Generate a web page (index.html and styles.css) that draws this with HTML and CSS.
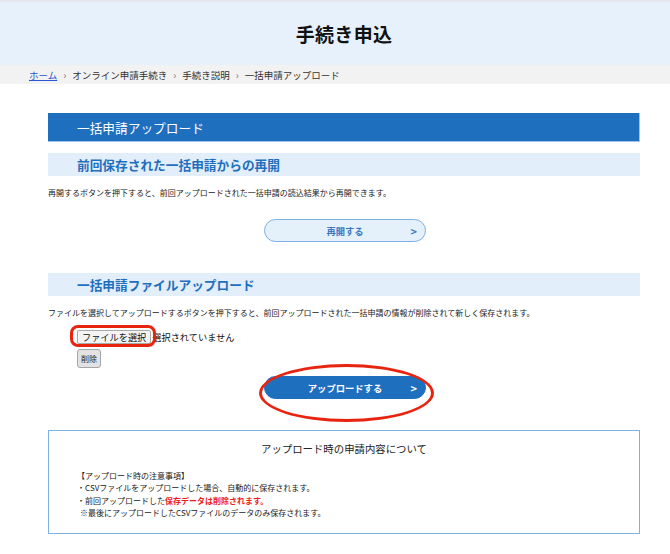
FILE: index.html
```html
<!DOCTYPE html>
<html lang="ja">
<head>
<meta charset="utf-8">
<title>手続き申込</title>
<link rel="stylesheet" href="styles.css">
</head>
<body>
<div class="topstrip"></div>
<header class="page-header">
  <h1 class="page-title">手続き申込</h1>
</header>
<nav class="breadcrumb">
  <a class="crumb-link" href="#">ホーム</a><span class="sep">›</span><span>オンライン申請手続き</span><span class="sep">›</span><span>手続き説明</span><span class="sep">›</span><span>一括申請アップロード</span>
</nav>
<main class="main">
  <h2 class="sec-title">一括申請アップロード</h2>

  <h3 class="sub-title">前回保存された一括申請からの再開</h3>
  <p class="desc">再開するボタンを押下すると、前回アップロードされた一括申請の読込結果から再開できます。</p>
  <div class="btn-row btn-row-resume">
    <button class="pill pill-light" type="button"><span class="pill-label">再開する</span><span class="pill-arrow">&gt;</span></button>
  </div>

  <h3 class="sub-title sub-title-2">一括申請ファイルアップロード</h3>
  <p class="desc">ファイルを選択してアップロードするボタンを押下すると、前回アップロードされた一括申請の情報が削除されて新しく保存されます。</p>
  <div class="file-area">
    <div class="file-row">
      <button class="file-btn" type="button">ファイルを選択</button><span class="file-status">選択されていません</span>
      <span class="mark-rect"></span>
    </div>
    <button class="del-btn" type="button">削除</button>
  </div>
  <div class="btn-row btn-row-upload">
    <button class="pill pill-dark" type="button"><span class="pill-label">アップロードする</span><span class="pill-arrow">&gt;</span></button>
    <span class="mark-ellipse"></span>
  </div>

  <section class="info-box">
    <h4 class="info-title">アップロード時の申請内容について</h4>
    <div class="info-body">
      <p class="info-line">【アップロード時の注意事項】</p>
      <p class="info-line">・CSVファイルをアップロードした場合、自動的に保存されます。</p>
      <p class="info-line">・前回アップロードした<strong class="warn">保存データは削除されます。</strong></p>
      <p class="info-line info-note">※最後にアップロードしたCSVファイルのデータのみ保存されます。</p>
    </div>
  </section>
</main>
</body>
</html>
```
FILE: styles.css
```css
* { box-sizing: border-box; }
html, body { margin: 0; padding: 0; background: #ffffff; }
body {
  font-family: "Noto Sans CJK JP", "Noto Sans", "DejaVu Sans", sans-serif;
  color: #222;
  width: 670px;
  height: 554px;
  overflow: hidden;
}
.topstrip { height: 2px; background: #e6e7ec; }
.page-header {
  height: 63px;
  background: #e7f1fc;
  display: flex;
  align-items: center;
  justify-content: center;
  padding-left: 18px;
}
.page-title {
  margin: 0;
  font-size: 19px;
  font-weight: 700;
  color: #111;
  letter-spacing: 0.3px;
}
.breadcrumb {
  height: 19px;
  background: #f2f2f2;
  padding-left: 29px;
  display: flex;
  align-items: center;
  font-size: 9.5px;
  color: #333;
  white-space: nowrap;
}
.crumb-link { color: #2a55d6; text-decoration: underline; }
.sep { padding: 0 6px; color: #777; font-size: 10px; }
.main {
  margin-left: 48px;
  width: 592px;
  padding-top: 29px;
}
.sec-title {
  margin: 0;
  height: 29px;
  background: #1f6fbf;
  border-bottom: 1px solid #9cc3ec;
  border-right: 1px solid #9cc3ec;
  color: #fff;
  font-size: 12.7px;
  font-weight: 400;
  padding-left: 29px;
  display: flex;
  align-items: center;
}
.sub-title {
  margin: 11px 0 0;
  height: 23px;
  background: #e2eef9;
  color: #1f6fbf;
  font-size: 12.7px;
  font-weight: 700;
  padding-left: 29px;
  display: flex;
  align-items: center;
}
.sub-title-2 { margin-top: 31px; }
.desc {
  margin: 11px 0 0;
  font-size: 8px;
  line-height: 12px;
  color: #222;
}
.btn-row { display: flex; justify-content: center; padding-left: 2px; }
.btn-row-resume { margin-top: 20px; }
.pill {
  width: 162px;
  height: 23px;
  border-radius: 12px;
  font-family: inherit;
  position: relative;
  display: flex;
  align-items: center;
  justify-content: center;
  padding: 0;
  cursor: pointer;
}
.pill-light {
  background: #e4f0fa;
  border: 1px solid #7fb0e2;
  color: #3a78c2;
}
.pill-dark {
  background: #1f6fbf;
  border: 1px solid #1f6fbf;
  color: #fff;
}
.pill-label { font-size: 9.3px; font-weight: 700; }
.pill-arrow {
  position: absolute;
  right: 8px;
  top: 50%;
  transform: translateY(-52%);
  font-size: 11px;
  font-weight: 700;
}
.file-area { margin-top: 10px; padding-left: 29px; }
.file-row {
  position: relative;
  display: flex;
  align-items: center;
  height: 15px;
}
.file-btn {
  height: 14px;
  padding: 0 4px;
  font-family: inherit;
  font-size: 9.2px;
  line-height: 12px;
  color: #111;
  background: #f4f4f4;
  border: 1px solid #a9a9a9;
  border-radius: 2px;
}
.file-status { font-size: 9.2px; color: #111; margin-left: 1px; }
.mark-rect {
  position: absolute;
  left: -7px;
  top: -4px;
  width: 86px;
  height: 22px;
  border: 3px solid #e8240f;
  border-radius: 8px;
}
.del-btn {
  display: block;
  margin-top: 5px;
  width: 24px;
  height: 19px;
  padding: 0;
  font-family: inherit;
  font-size: 8px;
  color: #222;
  background: #e2e2e2;
  border: 1px solid #a5a5a5;
  border-radius: 3px;
}
.btn-row-upload { margin-top: 8px; position: relative; }
.mark-ellipse {
  position: absolute;
  left: 211px;
  top: -12px;
  width: 175px;
  height: 58px;
  border: 3px solid #e8240f;
  border-radius: 50%;
}
.info-box {
  margin-top: 31px;
  height: 104px;
  border: 1px solid #7fb0e2;
  padding-top: 10px;
}
.info-title {
  margin: 0;
  text-align: center;
  font-size: 10.4px;
  font-weight: 400;
  color: #222;
  line-height: 16px;
}
.info-body { margin-top: 13px; padding-left: 28px; }
.info-line {
  margin: 0;
  font-size: 8px;
  line-height: 12.4px;
  color: #222;
}
.info-note { padding-left: 3px; }
.warn { color: #ee1c1c; font-weight: 700; }
```
